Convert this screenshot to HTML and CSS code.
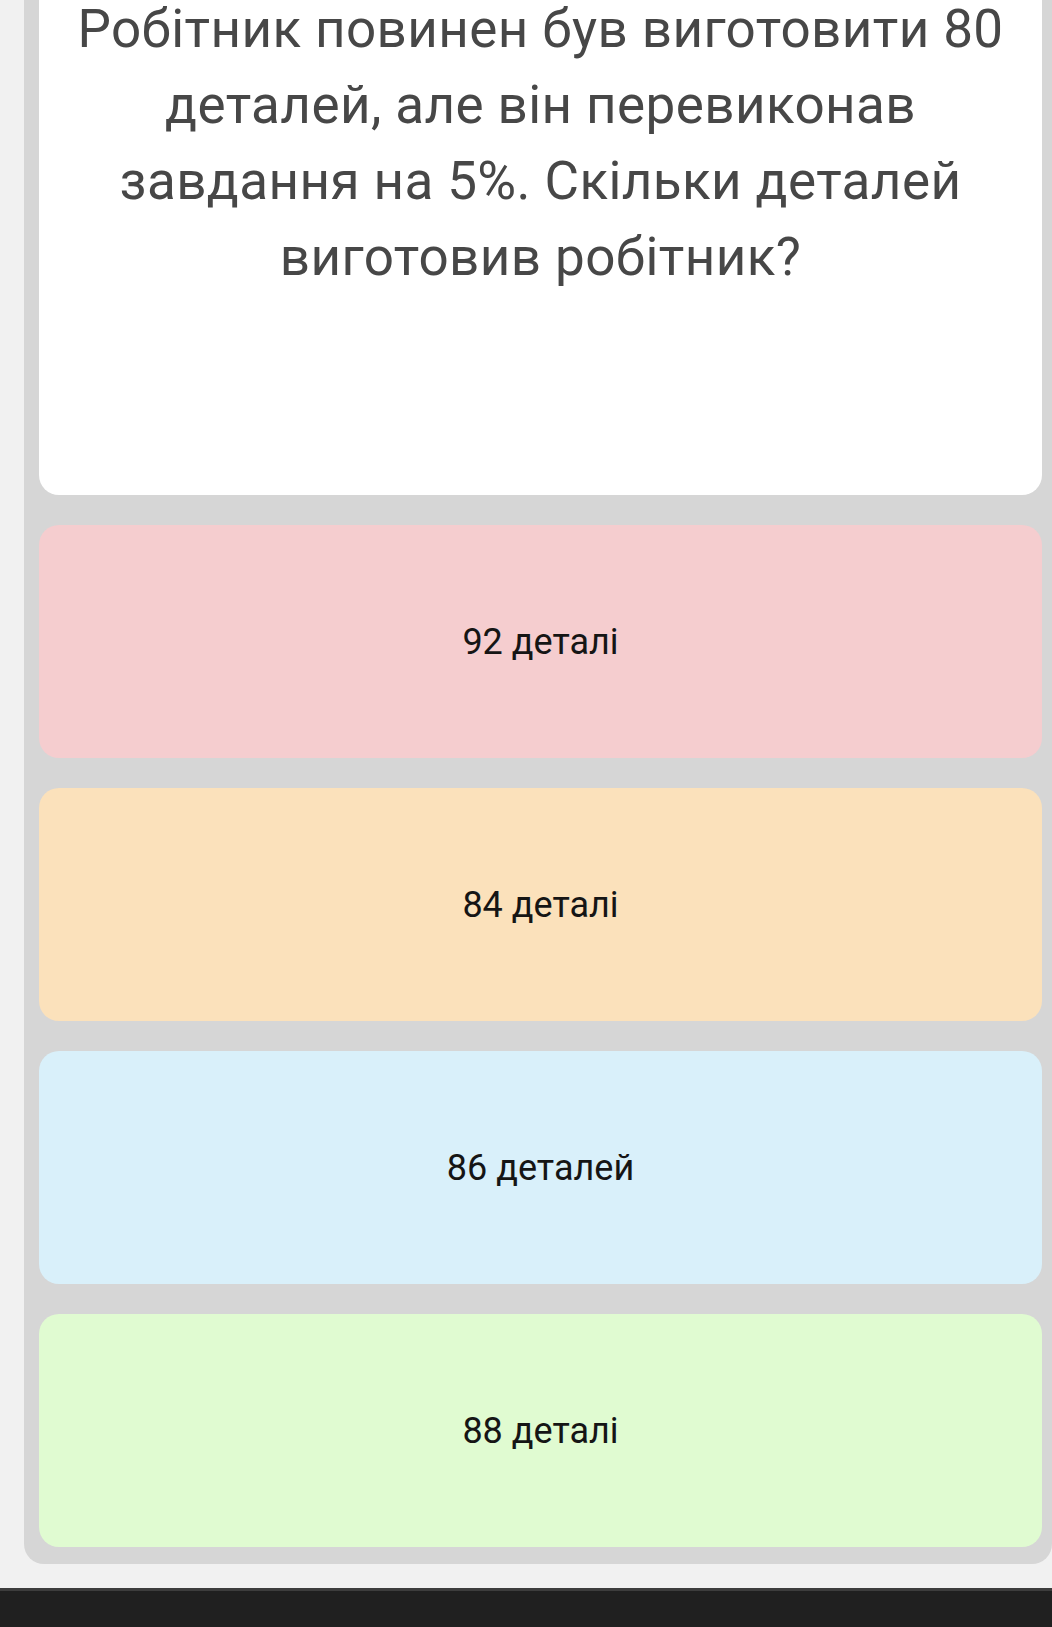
FILE: index.html
```html
<!DOCTYPE html>
<html lang="uk">

<head>
    <meta charset="utf-8">
    <meta name="viewport" content="width=device-width, initial-scale=1.0">
    <title>Питання</title>
    <link rel="stylesheet" href="styles.css">
</head>

<body>
    <main class="quiz">
        <section class="question">
            <p>Робітник повинен був виготовити 80 деталей, але він перевиконав завдання на 5%. Скільки деталей виготовив робітник?</p>
        </section>

        <section class="answers">
            <button class="answer red">92 деталі</button>
            <button class="answer orange">84 деталі</button>
            <button class="answer blue">86 деталей</button>
            <button class="answer green">88 деталі</button>
        </section>
    </main>

    <footer class="bar"></footer>
</body>

</html>
```

FILE: styles.css
```css
* {
    margin: 0;
    padding: 0;
    box-sizing: border-box;
}

body {
    background-color: #f1f1f1;
    font-family: Roboto, "Noto Sans", sans-serif;
    overflow: hidden;
}

.quiz {
    margin: -40px 0 24px 24px;
    padding: 15px 10px 17px 15px;
    background-color: #d6d6d6;
    border-radius: 20px;
}

.question {
    background-color: #ffffff;
    border-radius: 20px;
    padding: 16px 20px 200px;
    text-align: center;
}

.question p {
    color: #474747;
    font-size: 53px;
    letter-spacing: 0.4px;
    line-height: 76px;
}

.answers {
    display: flex;
    flex-direction: column;
    gap: 30px;
    margin-top: 30px;
}

.answer {
    display: flex;
    align-items: center;
    justify-content: center;
    height: 233px;
    border: none;
    border-radius: 20px;
    color: #151515;
    font-family: inherit;
    font-size: 36px;
}

.red {
    background-color: #f5cdcf;
}

.orange {
    background-color: #fbe1bb;
}

.blue {
    background-color: #d9f0fa;
}

.green {
    background-color: #e0fbd1;
}

.bar {
    height: 39px;
    background-color: #202020;
    border-top: 3px solid #3d3d3d;
}
```
